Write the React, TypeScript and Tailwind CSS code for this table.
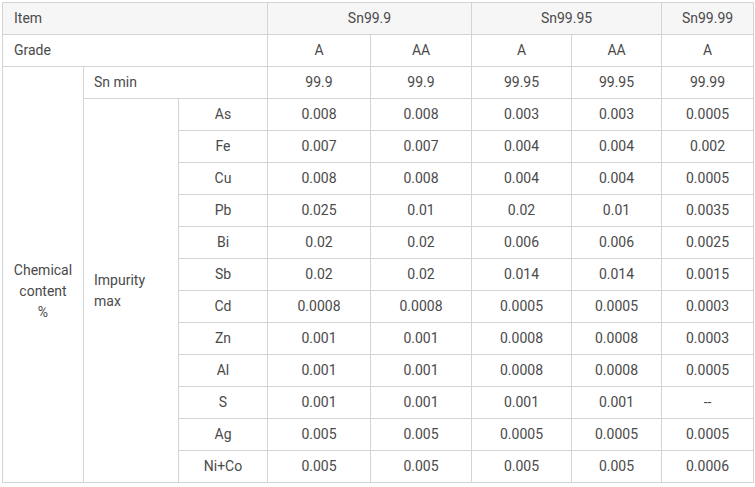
const grades = [
  ["As", "0.008", "0.008", "0.003", "0.003", "0.0005"],
  ["Fe", "0.007", "0.007", "0.004", "0.004", "0.002"],
  ["Cu", "0.008", "0.008", "0.004", "0.004", "0.0005"],
  ["Pb", "0.025", "0.01", "0.02", "0.01", "0.0035"],
  ["Bi", "0.02", "0.02", "0.006", "0.006", "0.0025"],
  ["Sb", "0.02", "0.02", "0.014", "0.014", "0.0015"],
  ["Cd", "0.0008", "0.0008", "0.0005", "0.0005", "0.0003"],
  ["Zn", "0.001", "0.001", "0.0008", "0.0008", "0.0003"],
  ["Al", "0.001", "0.001", "0.0008", "0.0008", "0.0005"],
  ["S", "0.001", "0.001", "0.001", "0.001", "--"],
  ["Ag", "0.005", "0.005", "0.0005", "0.0005", "0.0005"],
  ["Ni+Co", "0.005", "0.005", "0.005", "0.005", "0.0006"],
];

const cell = "border border-[#d4d4d4] h-[32px] p-0 text-center align-middle";

export default function App() {
  return (
    <div className="bg-white pt-[2px] pl-[2px] w-[755px] h-[487px] font-['Roboto','Liberation_Sans',sans-serif] text-[14px] leading-[21px] text-[#4a4a4a]">
      <table className="border-collapse table-fixed w-[751px]">
        <colgroup>
          <col className="w-[81px]" />
          <col className="w-[95px]" />
          <col className="w-[89px]" />
          <col className="w-[103px]" />
          <col className="w-[101px]" />
          <col className="w-[100px]" />
          <col className="w-[90px]" />
          <col className="w-[92px]" />
        </colgroup>
        <tbody>
          <tr className="bg-[#f6f6f6]">
            <td colSpan={3} className={`${cell} !text-left pl-[11px]`}>Item</td>
            <td colSpan={2} className={cell}>Sn99.9</td>
            <td colSpan={2} className={cell}>Sn99.95</td>
            <td className={cell}>Sn99.99</td>
          </tr>
          <tr>
            <td colSpan={3} className={`${cell} !text-left pl-[11px]`}>Grade</td>
            <td className={cell}>A</td>
            <td className={cell}>AA</td>
            <td className={cell}>A</td>
            <td className={cell}>AA</td>
            <td className={cell}>A</td>
          </tr>
          <tr>
            <td rowSpan={13} className={`${cell} pt-[34px]`}>
              Chemical
              <br />
              content
              <br />%
            </td>
            <td colSpan={2} className={`${cell} !text-left pl-[10px]`}>Sn min</td>
            <td className={cell}>99.9</td>
            <td className={cell}>99.9</td>
            <td className={cell}>99.95</td>
            <td className={cell}>99.95</td>
            <td className={cell}>99.99</td>
          </tr>
          {grades.map((row, i) => (
            <tr key={row[0]}>
              {i === 0 && (
                <td rowSpan={12} className={`${cell} !text-left pl-[10px]`}>
                  Impurity
                  <br />
                  max
                </td>
              )}
              {row.map((v, j) => (
                <td key={j} className={cell}>{v}</td>
              ))}
            </tr>
          ))}
        </tbody>
      </table>
    </div>
  );
}
